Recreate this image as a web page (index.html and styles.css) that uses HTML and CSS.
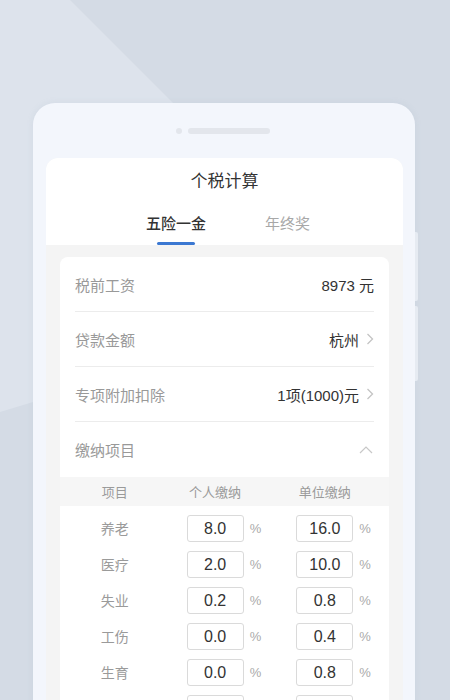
FILE: index.html
```html
<!DOCTYPE html>
<html lang="zh-CN">
<head>
<meta charset="utf-8">
<title>个税计算</title>
<link rel="stylesheet" href="styles.css">
</head>
<body>
<div class="stage">
  <div class="bg-shape"></div>
  <div class="phone">
    <span class="side-btn btn1"></span>
    <span class="side-btn btn2"></span>
    <div class="speaker"><span class="cam"></span><span class="grill"></span></div>
    <div class="screen">
      <div class="header">
        <div class="title">个税计算</div>
        <div class="tabs">
          <div class="tab active">五险一金<span class="bar"></span></div>
          <div class="tab">年终奖</div>
        </div>
      </div>
      <div class="content">
        <div class="card">
          <div class="row">
            <span class="label">税前工资</span>
            <span class="value">8973 元</span>
          </div>
          <div class="row">
            <span class="label">贷款金额</span>
            <span class="value">杭州<svg class="chev" viewBox="0 0 8 12" width="8" height="12"><polyline points="1.5,1 6.5,6 1.5,11" fill="none" stroke="#c4c4c4" stroke-width="1.3"/></svg></span>
          </div>
          <div class="row">
            <span class="label">专项附加扣除</span>
            <span class="value">1项(1000)元<svg class="chev" viewBox="0 0 8 12" width="8" height="12"><polyline points="1.5,1 6.5,6 1.5,11" fill="none" stroke="#c4c4c4" stroke-width="1.3"/></svg></span>
          </div>
          <div class="row last">
            <span class="label">缴纳项目</span>
            <svg class="up" viewBox="0 0 14 8" width="14" height="8"><polyline points="1,7 7,1 13,7" fill="none" stroke="#c8c8c8" stroke-width="1.2"/></svg>
          </div>
          <div class="thead">
            <span class="c-label">项目</span>
            <span class="c-cell"><span class="h">个人缴纳</span></span>
            <span class="c-cell"><span class="h">单位缴纳</span></span>
          </div>
          <div class="tbody">
            <div class="trow">
              <span class="c-label">养老</span>
              <span class="c-cell"><span class="box">8.0</span><span class="pct">%</span></span>
              <span class="c-cell"><span class="box">16.0</span><span class="pct">%</span></span>
            </div>
            <div class="trow">
              <span class="c-label">医疗</span>
              <span class="c-cell"><span class="box">2.0</span><span class="pct">%</span></span>
              <span class="c-cell"><span class="box">10.0</span><span class="pct">%</span></span>
            </div>
            <div class="trow">
              <span class="c-label">失业</span>
              <span class="c-cell"><span class="box">0.2</span><span class="pct">%</span></span>
              <span class="c-cell"><span class="box">0.8</span><span class="pct">%</span></span>
            </div>
            <div class="trow">
              <span class="c-label">工伤</span>
              <span class="c-cell"><span class="box">0.0</span><span class="pct">%</span></span>
              <span class="c-cell"><span class="box">0.4</span><span class="pct">%</span></span>
            </div>
            <div class="trow">
              <span class="c-label">生育</span>
              <span class="c-cell"><span class="box">0.0</span><span class="pct">%</span></span>
              <span class="c-cell"><span class="box">0.8</span><span class="pct">%</span></span>
            </div>
            <div class="trow">
              <span class="c-label"></span>
              <span class="c-cell"><span class="box"></span></span>
              <span class="c-cell"><span class="box"></span></span>
            </div>
          </div>
        </div>
      </div>
    </div>
  </div>
</div>
</body>
</html>
```

FILE: styles.css
```css
* { box-sizing: border-box; }
html, body { margin: 0; padding: 0; }
body {
  width: 450px;
  height: 700px;
  overflow: hidden;
  background: #d4dbe5;
  font-family: "Liberation Sans", "Noto Sans CJK SC", sans-serif;
}
.stage {
  position: relative;
  width: 450px;
  height: 700px;
  padding: 103px 0 0 33px;
  overflow: hidden;
}
.bg-shape {
  position: absolute;
  left: 0;
  top: 0;
  width: 450px;
  height: 700px;
  background: #dde3ec;
  clip-path: polygon(0 0, 70px 0, 370px 300px, 0 412px);
}
.phone {
  position: relative;
  width: 382px;
  height: 700px;
  background: #f3f6fc;
  border-radius: 22px 22px 0 0;
  padding: 24px 12px 0 13px;
  box-shadow: 0 0 6px rgba(150, 165, 185, 0.15);
}
.side-btn {
  position: absolute;
  right: -3px;
  width: 3px;
  background: #e6ebf2;
  border-radius: 0 2px 2px 0;
}
.btn1 { top: 129px; height: 69px; }
.btn2 { top: 203px; height: 75px; }
.speaker {
  display: flex;
  align-items: center;
  justify-content: center;
  gap: 6px;
  height: 7px;
  margin-bottom: 24px;
  padding-right: 4px;
}
.cam {
  width: 6px;
  height: 6px;
  border-radius: 50%;
  background: #e3e6ec;
}
.grill {
  width: 82px;
  height: 6px;
  border-radius: 3px;
  background: #e3e6ec;
}
.screen {
  background: #f4f4f4;
  border-radius: 12px 12px 0 0;
  height: 560px;
  overflow: hidden;
}
.header {
  background: #ffffff;
  padding-top: 12px;
  text-align: center;
}
.title {
  font-size: 17px;
  line-height: 24px;
  color: #333333;
}
.tabs {
  display: flex;
  justify-content: center;
  gap: 59px;
  margin-top: 18px;
  padding-left: 7px;
}
.tab {
  position: relative;
  font-size: 15px;
  line-height: 24px;
  height: 33px;
  color: #a8a8a8;
}
.tab.active {
  color: #333333;
  font-weight: 500;
}
.tab .bar {
  position: absolute;
  left: 11px;
  bottom: 0;
  width: 38px;
  height: 3px;
  border-radius: 2px;
  background: #3b78d2;
}
.content {
  padding: 12px 14px 0 14px;
}
.card {
  background: #ffffff;
  border-radius: 8px;
  overflow: hidden;
}
.row {
  display: flex;
  align-items: center;
  justify-content: space-between;
  height: 55px;
  margin: 0 15px;
  border-bottom: 1px solid #ececec;
  font-size: 15px;
}
.row.last { border-bottom: none; }
.label { color: #999999; }
.value {
  display: flex;
  align-items: center;
  gap: 7px;
  color: #333333;
}
.chev { display: block; }
.up { display: block; margin-right: 1px; }
.thead, .trow {
  display: flex;
  align-items: center;
}
.thead {
  height: 29px;
  background: #f6f6f6;
  font-size: 13px;
  color: #9a9a9a;
}
.tbody { padding-top: 4px; }
.trow { height: 36px; }
.c-label {
  width: 110px;
  text-align: center;
  font-size: 14px;
  color: #9a9a9a;
}
.thead .c-label { font-size: 13px; }
.c-cell {
  display: flex;
  align-items: center;
  width: 110px;
  padding-left: 17px;
}
.h {
  display: block;
  width: 57px;
  text-align: center;
  white-space: nowrap;
}
.box {
  display: block;
  width: 57px;
  height: 27px;
  line-height: 25px;
  border: 1px solid #dadada;
  border-radius: 3px;
  text-align: center;
  font-size: 16px;
  color: #333333;
}
.pct {
  margin-left: 6px;
  font-size: 13px;
  color: #aaaaaa;
}
```
